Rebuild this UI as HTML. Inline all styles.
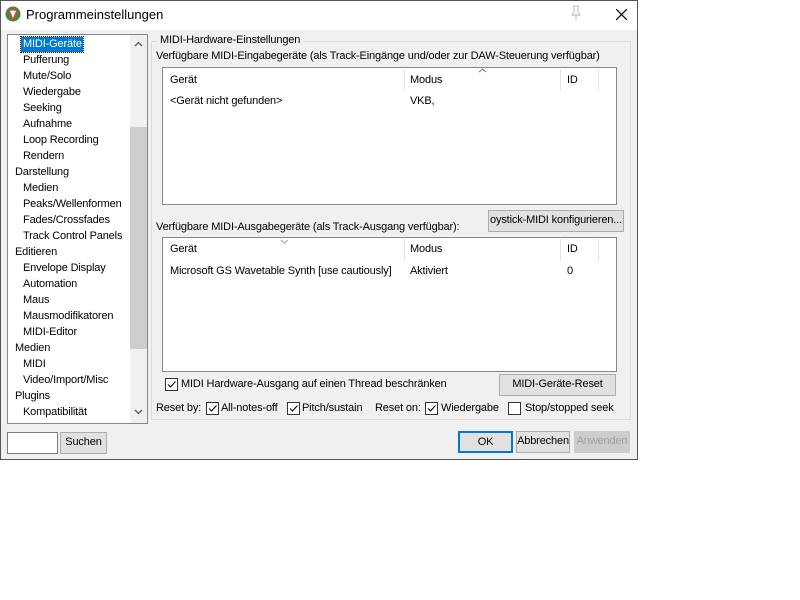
<!DOCTYPE html>
<html><head><style>
body{margin:0;width:800px;height:600px;background:#fff;font-family:"Liberation Sans",sans-serif;font-size:11px;letter-spacing:-0.15px;color:#000;position:relative;overflow:hidden}
.a{position:absolute;white-space:nowrap}
.win{position:absolute;left:0;top:0;width:636px;height:458px;border:1px solid #555;background:#f0f0f0}
.btn{position:absolute;background:#e1e1e1;border:1px solid #adadad;box-sizing:border-box;text-align:center;line-height:19px;white-space:nowrap;overflow:hidden}
.list{position:absolute;background:#fff;border:1px solid #828790;box-sizing:border-box}
.cb{position:absolute;width:11px;height:11px;border:1px solid #333;background:#fff}
.cb svg{position:absolute;left:0;top:0}
</style></head><body>
<div class="win">
<div class="a" style="left:0;top:0;width:636px;height:29px;background:#fff"></div>
<svg class="a" style="left:4px;top:5px" width="16" height="16" viewBox="0 0 16 16"><circle cx="8" cy="8" r="7.5" fill="#3a8a4a"/><path d="M3 4 Q8 1 13 4 L9 14 Q8 15 7 14Z" fill="#d94a2a"/><path d="M5 5 Q8 4 11 5 L8 12Z" fill="#fff"/></svg>
<div class="a" style="left:25px;top:6px;font-size:13px;letter-spacing:0">Programmeinstellungen</div>
<svg class="a" style="left:568px;top:4px" width="14" height="16"><path d="M4 1H10M5 1V7L3 10H11L9 7V1M7 10V15" stroke="#bbb" fill="none"/></svg>
<svg class="a" style="left:615px;top:8px" width="11" height="11"><path d="M0 0L11 11M11 0L0 11" stroke="#000" stroke-width="1.2"/></svg>

<div class="list" style="left:6px;top:33px;width:141px;height:390px"></div>
<div class="a" style="left:129px;top:34px;width:17px;height:388px;background:#f0f0f0"></div>
<div class="a" style="left:129px;top:126px;width:17px;height:222px;background:#cdcdcd"></div>
<svg class="a" style="left:133px;top:40px" width="9" height="6"><path d="M1 5L4.5 1.5L8 5" stroke="#555" fill="none" stroke-width="1.3"/></svg>
<svg class="a" style="left:133px;top:408px" width="9" height="6"><path d="M1 1L4.5 4.5L8 1" stroke="#555" fill="none" stroke-width="1.3"/></svg>
<div class="a" style="left:20px;top:36px;width:62px;height:15px;background:#0078d7;outline:1px dotted #000"></div>
<div class="a" style="left:22px;top:37px;color:#fff">MIDI-Geräte</div>
<div class="a" style="left:22px;top:53px">Pufferung</div>
<div class="a" style="left:22px;top:69px">Mute/Solo</div>
<div class="a" style="left:22px;top:85px">Wiedergabe</div>
<div class="a" style="left:22px;top:101px">Seeking</div>
<div class="a" style="left:22px;top:117px">Aufnahme</div>
<div class="a" style="left:22px;top:133px">Loop Recording</div>
<div class="a" style="left:22px;top:149px">Rendern</div>
<div class="a" style="left:14px;top:165px">Darstellung</div>
<div class="a" style="left:22px;top:181px">Medien</div>
<div class="a" style="left:22px;top:197px">Peaks/Wellenformen</div>
<div class="a" style="left:22px;top:213px">Fades/Crossfades</div>
<div class="a" style="left:22px;top:229px">Track Control Panels</div>
<div class="a" style="left:14px;top:245px">Editieren</div>
<div class="a" style="left:22px;top:261px">Envelope Display</div>
<div class="a" style="left:22px;top:277px">Automation</div>
<div class="a" style="left:22px;top:293px">Maus</div>
<div class="a" style="left:22px;top:309px">Mausmodifikatoren</div>
<div class="a" style="left:22px;top:325px">MIDI-Editor</div>
<div class="a" style="left:14px;top:341px">Medien</div>
<div class="a" style="left:22px;top:357px">MIDI</div>
<div class="a" style="left:22px;top:373px">Video/Import/Misc</div>
<div class="a" style="left:14px;top:389px">Plugins</div>
<div class="a" style="left:22px;top:405px">Kompatibilität</div>

<div class="a" style="left:150px;top:40px;width:478px;height:377px;border:1px solid #dcdcdc"></div>
<div class="a" style="left:156px;top:33px;background:#f0f0f0;padding:0 3px">MIDI-Hardware-Einstellungen</div>
<div class="a" style="left:155px;top:49px">Verfügbare MIDI-Eingabegeräte (als Track-Eingänge und/oder zur DAW-Steuerung verfügbar)</div>
<div class="list" style="left:161px;top:66px;width:455px;height:138px"></div>
<div class="a" style="left:403px;top:68px;width:1px;height:22px;background:#e5e5e5"></div>
<div class="a" style="left:559px;top:68px;width:1px;height:22px;background:#e5e5e5"></div>
<div class="a" style="left:597px;top:68px;width:1px;height:22px;background:#e5e5e5"></div>
<svg class="a" style="left:477px;top:67px" width="9" height="5"><path d="M1 4L4.5 1L8 4" stroke="#777" fill="none"/></svg>
<div class="a" style="left:169px;top:73px">Gerät</div>
<div class="a" style="left:409px;top:73px">Modus</div>
<div class="a" style="left:566px;top:73px">ID</div>
<div class="a" style="left:169px;top:94px">&lt;Gerät nicht gefunden&gt;</div>
<div class="a" style="left:409px;top:94px">VKB,</div>

<div class="a" style="left:155px;top:220px">Verfügbare MIDI-Ausgabegeräte (als Track-Ausgang verfügbar):</div>
<div class="btn" style="left:487px;top:209px;width:136px;height:22px">oystick-MIDI konfigurieren...</div>
<div class="list" style="left:161px;top:236px;width:455px;height:135px"></div>
<div class="a" style="left:403px;top:238px;width:1px;height:22px;background:#e5e5e5"></div>
<div class="a" style="left:559px;top:238px;width:1px;height:22px;background:#e5e5e5"></div>
<div class="a" style="left:597px;top:238px;width:1px;height:22px;background:#e5e5e5"></div>
<svg class="a" style="left:279px;top:238px" width="9" height="5"><path d="M1 1L4.5 4L8 1" stroke="#999" fill="none"/></svg>
<div class="a" style="left:169px;top:242px">Gerät</div>
<div class="a" style="left:409px;top:242px">Modus</div>
<div class="a" style="left:566px;top:242px">ID</div>
<div class="a" style="left:169px;top:264px">Microsoft GS Wavetable Synth [use cautiously]</div>
<div class="a" style="left:409px;top:264px">Aktiviert</div>
<div class="a" style="left:566px;top:264px">0</div>

<div class="cb" style="left:164px;top:377px"><svg width="11" height="11"><path d="M2 5.5L4.5 8L9.5 2.5" stroke="#000" fill="none"/></svg></div>
<div class="a" style="left:180px;top:377px">MIDI Hardware-Ausgang auf einen Thread beschränken</div>
<div class="btn" style="left:498px;top:373px;width:117px;height:22px">MIDI-Geräte-Reset</div>

<div class="a" style="left:155px;top:401px">Reset by:</div>
<div class="cb" style="left:205px;top:401px"><svg width="11" height="11"><path d="M2 5.5L4.5 8L9.5 2.5" stroke="#000" fill="none"/></svg></div>
<div class="a" style="left:220px;top:401px">All-notes-off</div>
<div class="cb" style="left:286px;top:401px"><svg width="11" height="11"><path d="M2 5.5L4.5 8L9.5 2.5" stroke="#000" fill="none"/></svg></div>
<div class="a" style="left:301px;top:401px">Pitch/sustain</div>
<div class="a" style="left:374px;top:401px">Reset on:</div>
<div class="cb" style="left:424px;top:401px"><svg width="11" height="11"><path d="M2 5.5L4.5 8L9.5 2.5" stroke="#000" fill="none"/></svg></div>
<div class="a" style="left:440px;top:401px">Wiedergabe</div>
<div class="cb" style="left:507px;top:401px"></div>
<div class="a" style="left:524px;top:401px">Stop/stopped seek</div>

<div class="a" style="left:6px;top:431px;width:49px;height:20px;background:#fff;border:1px solid #7a7a7a"></div>
<div class="btn" style="left:59px;top:431px;width:47px;height:22px">Suchen</div>
<div class="btn" style="left:457px;top:430px;width:55px;height:22px;border:2px solid #0078d7;line-height:18px">OK</div>
<div class="btn" style="left:515px;top:430px;width:54px;height:22px">Abbrechen</div>
<div class="btn" style="left:573px;top:430px;width:56px;height:22px;color:#a0a0a0;border-color:#ccc;background:#ccc">Anwenden</div>
</div>
</body></html>
